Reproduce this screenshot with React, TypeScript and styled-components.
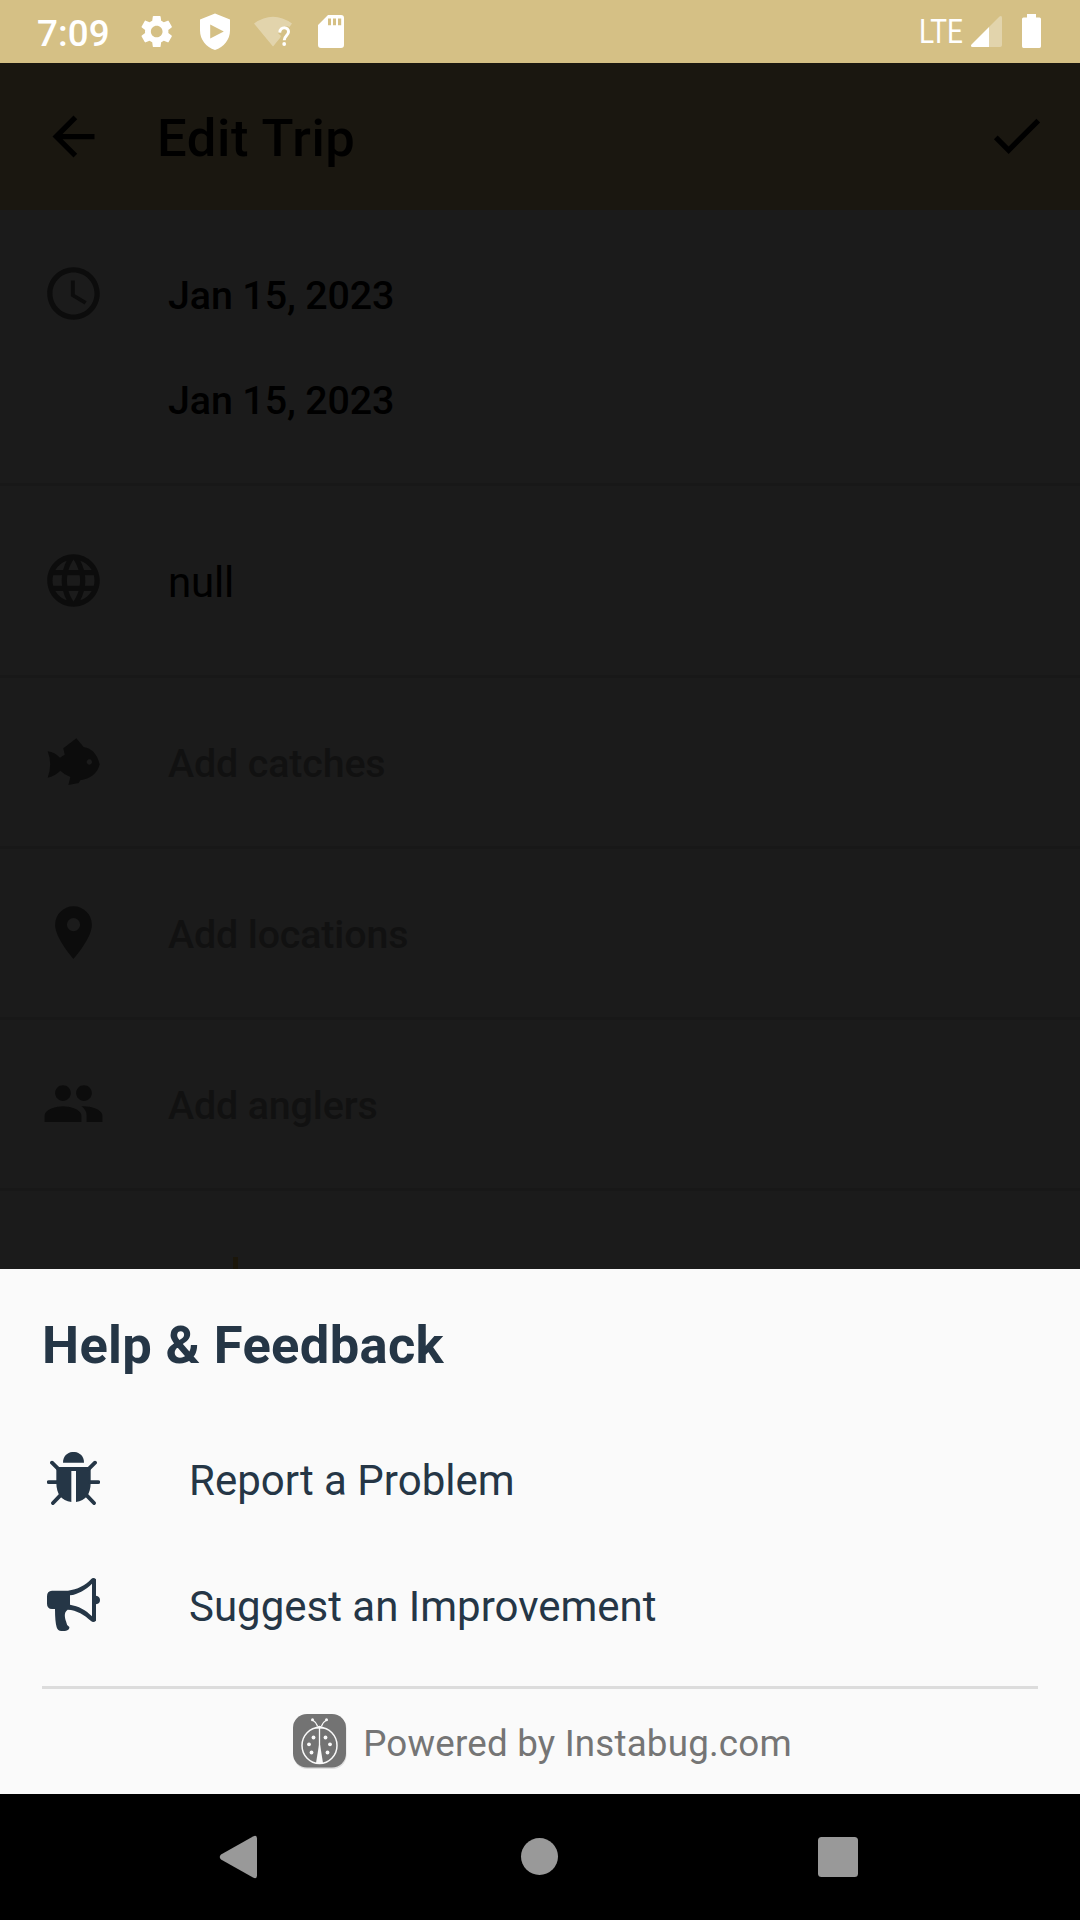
import React from 'react';
import styled, { createGlobalStyle } from 'styled-components';
import {
  MdAccessTime,
  MdArrowBack,
  MdCheck,
  MdLanguage,
  MdPeople,
  MdPlace,
  MdSettings,
} from 'react-icons/md';

const GlobalStyle = createGlobalStyle`
  html, body { margin: 0; padding: 0; background: #000; }
  * { box-sizing: border-box; }
`;

const Screen = styled.div`
  width: 1080px;
  height: 1920px;
  display: flex;
  flex-direction: column;
  overflow: hidden;
  background: #1b1b1b;
  font-family: Roboto, 'Liberation Sans', sans-serif;
  svg { display: block; flex: none; }
`;

const StatusBar = styled.header`
  height: 63px;
  flex: none;
  display: flex;
  align-items: center;
  justify-content: space-between;
  padding: 0 36px 0 37px;
  background: #d5c085;
  color: #fff;
`;

const StatusGroup = styled.div`
  display: flex;
  align-items: center;
`;

const Time = styled.span`
  width: 100px;
  padding-top: 3px;
  font-size: 36.75px;
  line-height: 63px;
  font-weight: 500;
  letter-spacing: 0.1px;
`;

const Network = styled.span`
  width: 46px;
  margin-right: 6px;
  font-size: 33px;
  line-height: 63px;
  white-space: nowrap;
  transform: scaleX(0.85);
  transform-origin: left center;
`;

const AppBar = styled.div`
  height: 147px;
  flex: none;
  display: flex;
  align-items: center;
  padding: 0 32px 0 42px;
  background: #1a1710;
  color: #000;
`;

const AppTitle = styled.h1`
  flex: 1;
  margin: 0;
  padding: 3px 0 0 52px;
  font-size: 52.5px;
  line-height: 62px;
  font-weight: 500;
  letter-spacing: 0.6px;
`;

const Confirm = styled.div`
  padding-bottom: 2px;
`;

const Form = styled.main`
  flex: 1;
  display: flex;
  flex-direction: column;
  overflow: hidden;
`;

const Row = styled.div<{ $height: number; $top?: boolean }>`
  height: ${(p) => p.$height}px;
  flex: none;
  display: flex;
  align-items: ${(p) => (p.$top ? 'flex-start' : 'center')};
  padding: ${(p) => (p.$top ? '33px 42px 0' : '0 42px')};
  border-bottom: 3px solid #181818;
  color: #0c0c0c;
`;

const RowIcon = styled.div<{ $drop?: number }>`
  width: 63px;
  height: 63px;
  margin-right: 63px;
  margin-top: ${(p) => p.$drop ?? 0}px;
`;

const Dates = styled.div`
  display: flex;
  flex-direction: column;
`;

const DateText = styled.span`
  font-size: 39.4px;
  line-height: 105px;
  font-weight: 500;
  letter-spacing: -0.12px;
  color: #000;
`;

const Value = styled.span`
  padding-top: 4px;
  font-size: 42px;
  line-height: 50px;
  letter-spacing: -0.2px;
  color: #000;
`;

const Hint = styled.span`
  padding-top: 3px;
  font-size: 39.4px;
  line-height: 48px;
  font-weight: 500;
  letter-spacing: -0.14px;
  color: #111;
`;

const NextRow = styled.div`
  flex: 1;
  display: flex;
  align-items: flex-end;
  padding-left: 233px;
`;

const Peek = styled.div`
  width: 5px;
  height: 12px;
  background: #1b160a;
`;

const Sheet = styled.section`
  height: 525px;
  flex: none;
  display: flex;
  flex-direction: column;
  padding: 45px 42px 0;
  background: #fafafa;
  color: #253646;
`;

const SheetTitle = styled.h2`
  height: 101px;
  margin: 0;
  font-size: 52.5px;
  line-height: 62px;
  font-weight: 700;
  letter-spacing: 0.33px;
`;

const Option = styled.div`
  height: 126px;
  flex: none;
  display: flex;
  align-items: center;
  padding-left: 5px;
`;

const OptionLabel = styled.span`
  padding: 6px 0 0 89px;
  font-size: 42px;
  line-height: 50px;
`;

const PoweredBy = styled.footer`
  height: 108px;
  flex: none;
  margin-top: 19px;
  display: flex;
  align-items: center;
  justify-content: center;
  gap: 16px;
  padding: 0 0 2px 5px;
  border-top: 3px solid #dcdcdc;
  color: #757575;
  font-size: 36.75px;
  line-height: 44px;
`;

const PoweredText = styled.span`
  padding-top: 6px;
  letter-spacing: 0.19px;
`;

const NavBar = styled.nav`
  height: 126px;
  flex: none;
  display: grid;
  grid-template-columns: repeat(3, 300px);
  justify-content: center;
  align-items: center;
  justify-items: center;
  background: #000;
`;

const StatusIcons = () => (
  <svg width="220" height="63" viewBox="137 0 220 63" fill="#fff">
    <MdSettings x={137.2} y={12} size={39} />
    <path
      fillRule="evenodd"
      d="M215 13.5 L230 19.5 V30.500 C230 39.500 224 47 215 50 C206 47 200 39.500 200 30.500 V19.500 Z M210.200 24.600 V38.600 L223.800 31.600 Z"
    />
    <path
      opacity=".32"
      d="M254 23.500 Q273 10 292 23.500 L289.500 27 C285 24.500 279 27 278 33 L281 36 L280 38 L273 46.500 Z"
    />
    <path
      d="M279.700 32.600 C280 25.700 288.900 26.500 288.500 32 C288.200 35.800 284.200 36 284.200 40.300"
      fill="none"
      stroke="#fff"
      strokeWidth="3"
    />
    <circle cx="284.200" cy="44" r="1.900" />
    <path
      fillRule="evenodd"
      d="M328 15 H341 Q344 15 344 18 V45 Q344 48 341 48 H321 Q318 48 318 45 V25 Z M328 18.500 V25.300 H331 V18.500 Z M333 18.500 V25.300 H336 V18.500 Z M338 18.500 V25.300 H341.200 V18.500 Z"
    />
  </svg>
);

const SignalBattery = () => (
  <svg width="73" height="63" viewBox="971 0 73 63" fill="#fff">
    <path opacity=".32" d="M989 27 L999.500 16.500 Q1002 15 1002 18 V45 Q1002 47 1000 47 H989 Z" />
    <path d="M989 27 V47 H972.500 Q970 46.500 971.500 44.500 Z" />
    <path d="M1027 14 H1036 V17.500 H1039.500 Q1041 17.500 1041 19 V46.300 Q1041 48 1039.500 48 H1023.500 Q1022 48 1022 46.300 V19 Q1022 17.500 1023.500 17.500 H1027 Z" />
  </svg>
);

const FishIcon = () => (
  <svg width="63" height="63" viewBox="126 692 189 189" fill="currentColor">
    <path
      fillRule="evenodd"
      d="M143 753 Q164 756 180 772 Q186 768 194 763 L190 744 L229 714 L251 740 C275 744 291 760 299 792 C293 820 270 836 241 840 L236 848 L205 854 L211 830 Q193 823 181 811 Q164 828 143 832 Q158 792 143 753 Z M268 777 a8 8 0 1 0 .1 0 Z"
    />
  </svg>
);

const BugIcon = () => (
  <svg width="53" height="53" viewBox="141 156 159 159" fill="currentColor">
    <path d="M189 188 C189 145 252 145 252 188 Z" />
    <path d="M169 201 H272 V248 C272 282 257 302 228 306 V213 H214 V306 C184 302 169 282 169 248 Z" />
    <path
      d="M156 188 L174 206 M285 188 L267 206 M146 246.500 H172 M295 246.500 H270 M159 309 L181 286 M282 309 L260 286"
      stroke="currentColor"
      strokeWidth="11.500"
      strokeLinecap="round"
      fill="none"
    />
  </svg>
);

const MegaphoneIcon = () => (
  <svg width="53" height="53" viewBox="141 534 159 159" fill="currentColor">
    <path
      fillRule="evenodd"
      d="M156 572 H204 C232 569 256 556 273 538 Q280 530 288 538 V587 Q300 589 300 600 Q300 611 288 613 V662 Q280 670 273 663 C254 645 230 630 203 629 C191 637 194 652 198 664 Q199 675 208 681 Q209 690 195 693 H184 Q173 693 170 682 Q165 665 165 627 H156 Q141 626 141 611 V589 Q141 573 156 572 Z M210 586 V614 C235 618 258 630 276 649 V551 C258 569 234 583 210 586 Z"
    />
  </svg>
);

const LadybugLogo = () => (
  <svg width="54" height="56" viewBox="0 0 54 56">
    <rect x="0.500" y="2" width="53" height="54" rx="14" fill="#dedede" />
    <rect x="0" y="1" width="53" height="53.500" rx="14" fill="#737373" />
    <ellipse cx="26.500" cy="32.500" rx="17.500" ry="18" fill="none" stroke="#fafafa" strokeWidth="1.500" />
    <path d="M21 15.500 Q26.500 10 32 15.500 Z" fill="#fafafa" />
    <path
      d="M26.500 15 V40 M24.500 13 Q23 9 19.500 7 M28.500 13 Q30 9 33.500 7"
      fill="none"
      stroke="#fafafa"
      strokeWidth="1.300"
    />
    <path d="M26 32 H27.100 L30 50 Q26.500 51.500 23 50 Z" fill="#fafafa" />
    <g fill="#fafafa">
      <circle cx="19.500" cy="6.800" r="1.500" />
      <circle cx="33.500" cy="6.800" r="1.500" />
      <circle cx="20.500" cy="24.500" r="1.900" />
      <circle cx="32.500" cy="24.500" r="1.900" />
      <circle cx="16" cy="31.300" r="1.900" />
      <circle cx="37" cy="31.300" r="1.900" />
      <circle cx="18.500" cy="39.500" r="1.900" />
      <circle cx="34.500" cy="39.500" r="1.900" />
    </g>
  </svg>
);

export default function App() {
  return (
    <>
      <GlobalStyle />
      <Screen>
        <StatusBar>
          <StatusGroup>
            <Time>7:09</Time>
            <StatusIcons />
          </StatusGroup>
          <StatusGroup>
            <Network>LTE</Network>
            <SignalBattery />
          </StatusGroup>
        </StatusBar>
        <AppBar>
          <MdArrowBack size={63} />
          <AppTitle>Edit Trip</AppTitle>
          <Confirm>
            <MdCheck size={63} />
          </Confirm>
        </AppBar>
        <Form>
          <Row $height={276} $top>
            <RowIcon $drop={19}>
              <MdAccessTime size={63} />
            </RowIcon>
            <Dates>
              <DateText>Jan 15, 2023</DateText>
              <DateText>Jan 15, 2023</DateText>
            </Dates>
          </Row>
          <Row $height={192}>
            <RowIcon>
              <MdLanguage size={63} />
            </RowIcon>
            <Value>null</Value>
          </Row>
          <Row $height={171}>
            <RowIcon>
              <FishIcon />
            </RowIcon>
            <Hint>Add catches</Hint>
          </Row>
          <Row $height={171}>
            <RowIcon $drop={-1}>
              <MdPlace size={63} />
            </RowIcon>
            <Hint>Add locations</Hint>
          </Row>
          <Row $height={171}>
            <RowIcon $drop={-1}>
              <MdPeople size={63} />
            </RowIcon>
            <Hint>Add anglers</Hint>
          </Row>
          <NextRow>
            <Peek />
          </NextRow>
        </Form>
        <Sheet>
          <SheetTitle>Help &amp; Feedback</SheetTitle>
          <Option>
            <BugIcon />
            <OptionLabel>Report a Problem</OptionLabel>
          </Option>
          <Option>
            <MegaphoneIcon />
            <OptionLabel>Suggest an Improvement</OptionLabel>
          </Option>
          <PoweredBy>
            <LadybugLogo />
            <PoweredText>Powered by Instabug.com</PoweredText>
          </PoweredBy>
        </Sheet>
        <NavBar>
          <svg width="60" height="60" viewBox="210 1827 60 60" fill="#999">
            <path d="M221 1854.500 L253 1836.500 Q257 1834.500 257 1838.500 V1875.500 Q257 1879.500 253 1877.500 L221 1859.500 Q218.500 1857 221 1854.500 Z" />
          </svg>
          <svg width="60" height="60" viewBox="510 1827 60 60" fill="#999">
            <circle cx="539.500" cy="1856.500" r="18.500" />
          </svg>
          <svg width="60" height="60" viewBox="810 1827 60 60" fill="#999">
            <rect x="818" y="1837" width="40" height="40" rx="3.500" />
          </svg>
        </NavBar>
      </Screen>
    </>
  );
}
